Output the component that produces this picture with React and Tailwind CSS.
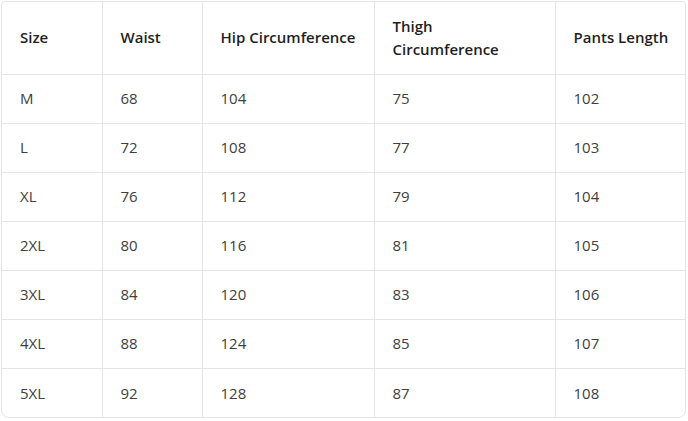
const headers = ["Size", "Waist", "Hip Circumference", "Thigh Circumference", "Pants Length"];

const rows = [
  ["M", "68", "104", "75", "102"],
  ["L", "72", "108", "77", "103"],
  ["XL", "76", "112", "79", "104"],
  ["2XL", "80", "116", "81", "105"],
  ["3XL", "84", "120", "83", "106"],
  ["4XL", "88", "124", "85", "107"],
  ["5XL", "92", "128", "87", "108"],
];

const widths = ["w-[100px]", "w-[100px]", "w-[172px]", "w-[181px]", "w-auto"];

export default function App() {
  return (
    <div className="bg-white w-[688px] h-[421px] pl-[1px] pt-[1px] font-['Open_Sans','Noto_Sans',sans-serif]">
      <div className="border border-[#e5e5e5] rounded-b-lg rounded-t-sm overflow-hidden w-[685px]">
        <table className="table-fixed w-full border-collapse">
          <thead>
            <tr className="h-[72px]">
              {headers.map((h, i) => (
                <th
                  key={h}
                  className={`${widths[i]} text-left align-middle px-[18px] text-[15px] leading-[23px] font-semibold text-[#1f1f1f] whitespace-nowrap ${i > 0 ? "border-l border-[#e5e5e5]" : ""}`}
                >
                  {h === "Thigh Circumference" ? (
                    <>
                      Thigh
                      <br />
                      Circumference
                    </>
                  ) : (
                    h
                  )}
                </th>
              ))}
            </tr>
          </thead>
          <tbody>
            {rows.map((r) => (
              <tr key={r[0]} className="h-[49px] border-t border-[#e5e5e5]">
                {r.map((c, i) => (
                  <td
                    key={i}
                    className={`px-[18px] text-[15px] text-[#404040] align-middle ${i > 0 ? "border-l border-[#e5e5e5]" : ""}`}
                  >
                    {c}
                  </td>
                ))}
              </tr>
            ))}
          </tbody>
        </table>
      </div>
    </div>
  );
}
